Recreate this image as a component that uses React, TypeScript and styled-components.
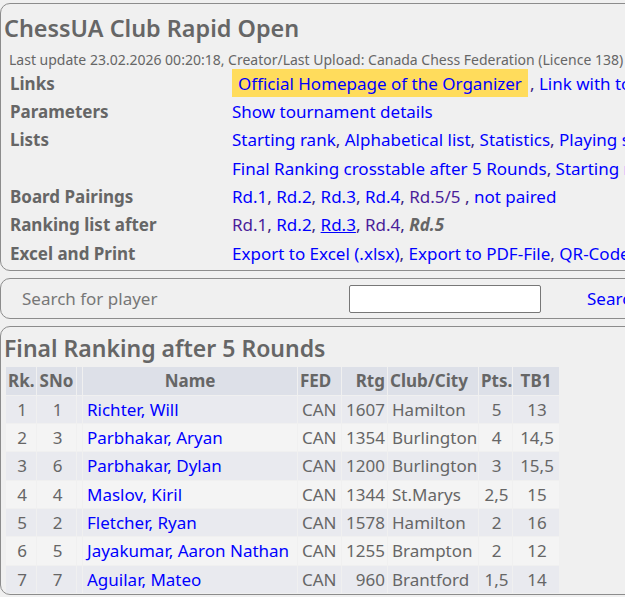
import React from "react";
import styled, { createGlobalStyle } from "styled-components";

const Global = createGlobalStyle`
  html, body {
    margin: 0;
    padding: 0;
    overflow: hidden;
    background: #f0f0f0;
  }
  body {
    font-family: "Noto Sans", "Open Sans", sans-serif;
    color: #666;
  }
`;

const Page = styled.div`
  width: 900px;
  padding-top: 3px;
  display: flex;
  flex-direction: column;
  gap: 7px;
`;

const Card = styled.div`
  border: 1px solid #8c8c8c;
  border-radius: 10px;
  background: #f0f0f0;
`;

const Title = styled.h1`
  margin: 0;
  padding: 8px 0 0 3px;
  font-size: 23.4px;
  font-weight: 600;
  line-height: 32px;
  color: #666;
`;

const UpdateLine = styled.div`
  padding: 7px 0 0 8px;
  font-size: 14px;
  line-height: 17px;
  color: #666;
`;

const InfoGrid = styled.div`
  display: grid;
  grid-template-columns: 222px auto;
  grid-auto-rows: 28.33px;
  align-items: center;
  padding: 1px 0 3px 9px;
  font-size: 17px;
  white-space: nowrap;
`;

const Label = styled.div`
  font-weight: 700;
  color: #666;
`;

const Value = styled.div`
  color: #666;
  height: 100%;
  display: flex;
  align-items: center;
`;

const Link = styled.a<{ $visited?: boolean; $underline?: boolean }>`
  color: ${(p) => (p.$visited ? "#4a1d9a" : "#0000ff")};
  text-decoration: ${(p) => (p.$underline ? "underline" : "none")};
  cursor: pointer;
`;

const Highlight = styled.span`
  background: #ffdc5c;
  height: 100%;
  display: inline-flex;
  align-items: center;
  padding: 0 6px 0 6px;
  margin-right: 2px;
`;

const Sep = styled.span`
  color: #3d1f80;
`;

const Current = styled.span`
  font-weight: 700;
  font-style: italic;
  color: #666;
`;

const SearchCard = styled(Card)`
  display: flex;
  align-items: center;
  height: 39px;
  padding-left: 21px;
  font-size: 17px;
`;

const SearchLabel = styled.div`
  width: 327px;
  color: #777;
`;

const SearchInput = styled.input`
  width: 192px;
  height: 28px;
  box-sizing: border-box;
  border: 1px solid #777;
  border-radius: 2px;
  background: #fff;
  margin-right: 46px;
`;

const SubTitle = styled.h2`
  margin: 0;
  padding: 6px 0 3px 3px;
  font-size: 23px;
  font-weight: 600;
  line-height: 30px;
  color: #666;
`;

const Table = styled.table`
  border-collapse: separate;
  border-spacing: 1px;
  table-layout: fixed;
  width: 555px;
  margin-left: 4px;
  font-size: 17px;
  white-space: nowrap;
`;

const Th = styled.th<{ $align?: string; $w: number }>`
  background: #dde0e8;
  font-weight: 700;
  color: #666;
  height: 27.33px;
  padding: 0 2px;
  width: ${(p) => p.$w}px;
  box-sizing: border-box;
  overflow: hidden;
  text-align: ${(p) => p.$align || "center"};
`;

const Tr = styled.tr<{ $odd: boolean }>`
  background: ${(p) => (p.$odd ? "#e9eaef" : "#f4f4f4")};
`;

const Td = styled.td<{ $align?: string }>`
  height: 27.33px;
  padding: 0 2px 0 4px;
  color: #666;
  overflow: hidden;
  text-align: ${(p) => p.$align || "left"};
`;

const rows = [
  [1, 1, "Richter, Will", "CAN", 1607, "Hamilton", "5", "13"],
  [2, 3, "Parbhakar, Aryan", "CAN", 1354, "Burlington", "4", "14,5"],
  [3, 6, "Parbhakar, Dylan", "CAN", 1200, "Burlington", "3", "15,5"],
  [4, 4, "Maslov, Kiril", "CAN", 1344, "St.Marys", "2,5", "15"],
  [5, 2, "Fletcher, Ryan", "CAN", 1578, "Hamilton", "2", "16"],
  [6, 5, "Jayakumar, Aaron Nathan", "CAN", 1255, "Brampton", "2", "12"],
  [7, 7, "Aguilar, Mateo", "CAN", 960, "Brantford", "1,5", "14"],
] as const;

export default function App() {
  return (
    <>
      <Global />
      <Page>
        <Card>
          <Title>ChessUA Club Rapid Open</Title>
          <UpdateLine>
            Last update 23.02.2026 00:20:18, Creator/Last Upload: Canada Chess Federation (Licence 138)
          </UpdateLine>
          <InfoGrid>
            <Label>Links</Label>
            <Value>
              <Highlight>
                <Link>Official Homepage of the Organizer</Link>
              </Highlight>
              <Sep>,&nbsp;</Sep>
              <Link>Link with tournament calendar</Link>
            </Value>
            <Label>Parameters</Label>
            <Value>
              <Link>Show tournament details</Link>
            </Value>
            <Label>Lists</Label>
            <Value>
              <Link>Starting rank</Link>
              <Sep>,&nbsp;</Sep>
              <Link>Alphabetical list</Link>
              <Sep>,&nbsp;</Sep>
              <Link>Statistics</Link>
              <Sep>,&nbsp;</Sep>
              <Link>Playing schedule</Link>
            </Value>
            <Label></Label>
            <Value>
              <Link>Final Ranking crosstable after 5 Rounds</Link>
              <Sep>,&nbsp;</Sep>
              <Link>Starting rank crosstable</Link>
            </Value>
            <Label>Board Pairings</Label>
            <Value>
              <Link>Rd.1</Link>
              <Sep>,&nbsp;</Sep>
              <Link>Rd.2</Link>
              <Sep>,&nbsp;</Sep>
              <Link>Rd.3</Link>
              <Sep>,&nbsp;</Sep>
              <Link>Rd.4</Link>
              <Sep>,&nbsp;</Sep>
              <Link $visited>Rd.5/5</Link>
              <Sep>&nbsp;,&nbsp;</Sep>
              <Link>not paired</Link>
            </Value>
            <Label>Ranking list after</Label>
            <Value>
              <Link $visited>Rd.1</Link>
              <Sep>,&nbsp;</Sep>
              <Link>Rd.2</Link>
              <Sep>,&nbsp;</Sep>
              <Link $underline>Rd.3</Link>
              <Sep>,&nbsp;</Sep>
              <Link $visited>Rd.4</Link>
              <Sep>,&nbsp;</Sep>
              <Current>Rd.5</Current>
            </Value>
            <Label>Excel and Print</Label>
            <Value>
              <Link>Export to Excel (.xlsx)</Link>
              <Sep>,&nbsp;</Sep>
              <Link>Export to PDF-File</Link>
              <Sep>,&nbsp;</Sep>
              <Link>QR-Codes</Link>
            </Value>
          </InfoGrid>
        </Card>

        <SearchCard>
          <SearchLabel>Search for player</SearchLabel>
          <SearchInput type="text" />
          <Link>Search</Link>
        </SearchCard>

        <Card>
          <SubTitle>Final Ranking after 5 Rounds</SubTitle>
          <Table>
            <thead>
              <tr>
                <Th $w={30}>Rk.</Th>
                <Th $w={39}>SNo</Th>
                <Th $w={5}></Th>
                <Th $w={214}>Name</Th>
                <Th $w={43} $align="left">FED</Th>
                <Th $w={45} $align="right">Rtg</Th>
                <Th $w={90} $align="left">Club/City</Th>
                <Th $w={33}>Pts.</Th>
                <Th $w={46}>TB1</Th>
              </tr>
            </thead>
            <tbody>
              {rows.map((r, i) => (
                <Tr key={i} $odd={i % 2 === 0}>
                  <Td $align="center">{r[0]}</Td>
                  <Td $align="center">{r[1]}</Td>
                  <Td></Td>
                  <Td>
                    <Link>{r[2]}</Link>
                  </Td>
                  <Td>{r[3]}</Td>
                  <Td $align="right">{r[4]}</Td>
                  <Td>{r[5]}</Td>
                  <Td $align="center">{r[6]}</Td>
                  <Td $align="center">{r[7]}</Td>
                </Tr>
              ))}
            </tbody>
          </Table>
        </Card>
      </Page>
    </>
  );
}
